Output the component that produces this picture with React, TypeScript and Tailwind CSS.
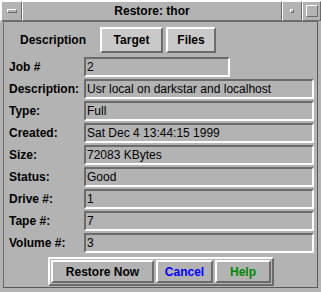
const rows = [
  { label: "Job #", value: "2", short: true },
  { label: "Description:", value: "Usr local on darkstar and localhost" },
  { label: "Type:", value: "Full" },
  { label: "Created:", value: "Sat Dec 4 13:44:15 1999" },
  { label: "Size:", value: "72083 KBytes" },
  { label: "Status:", value: "Good" },
  { label: "Drive #:", value: "1" },
  { label: "Tape #:", value: "7" },
  { label: "Volume #:", value: "3" },
];

const raised =
  "border-t-white border-l-white border-b-[#6b6b6b] border-r-[#6b6b6b]";
const sunken =
  "border-t-[#6b6b6b] border-l-[#6b6b6b] border-b-white border-r-white";

function TitleButton({ children, w }: { children: React.ReactNode; w: string }) {
  return (
    <div className={`${w} h-[20px] border ${raised} bg-[#b3b3b3] flex items-center justify-center`}>
      {children}
    </div>
  );
}

export default function App() {
  return (
    <div
      className="w-[321px] h-[292px] bg-[#b3b3b3] flex flex-col text-black"
      style={{ fontFamily: '"Liberation Sans", Arial, sans-serif' }}
    >
      {/* window title bar */}
      <div className="flex h-[21px] border-t border-l border-white bg-[#b3b3b3]">
        <TitleButton w="w-[21px]">
          <div className={`w-[10px] h-[4px] border ${raised}`} />
        </TitleButton>
        <div className={`flex-1 h-[20px] border ${raised} flex items-center justify-center text-[12px] font-bold`}>
          Restore: thor
        </div>
        <TitleButton w="w-[20px]">
          <div className={`w-[4px] h-[4px] border ${raised}`} />
        </TitleButton>
        <TitleButton w="w-[19px]">
          <div className={`w-[12px] h-[12px] border ${raised}`} />
        </TitleButton>
      </div>

      {/* dialog body */}
      <div className="flex-1 mx-[3px] mb-[4px] border-l border-t border-[#6b6b6b] border-r border-r-[#5a5a5a] border-b border-b-[#5a5a5a] flex flex-col">
        {/* tabs */}
        <div className="flex items-center h-[27px] mt-[4px] pl-[16px]">
          <span className="text-[12px] font-bold w-[80px]">Description</span>
          <button className={`w-[63px] h-[26px] border-2 ${raised} bg-[#c9c9c9] text-[12px] font-bold`}>
            Target
          </button>
          <button className={`ml-[3px] w-[50px] h-[26px] border-2 ${raised} bg-[#c9c9c9] text-[12px] font-bold`}>
            Files
          </button>
        </div>

        {/* fields */}
        <div className="flex flex-col gap-[2px] mt-[4px]">
          {rows.map((r) => (
            <div key={r.label} className="flex items-center h-[20px]">
              <span className="w-[80px] pl-[5px] text-[12px] font-bold">{r.label}</span>
              <div
                className={`${r.short ? "w-[146px]" : "w-[230px]"} h-[20px] border-2 ${sunken} text-[12px] leading-[16px] pl-[1px] whitespace-nowrap overflow-hidden`}
              >
                {r.value}
              </div>
            </div>
          ))}
        </div>

        {/* action buttons */}
        <div className="flex justify-start pl-[44px] mt-[4px]">
          <div className={`flex gap-[2px] p-[1px] border-2 ${raised}`}>
            <button className={`w-[103px] h-[23px] border-2 ${raised} text-[12px] font-bold`}>
              Restore Now
            </button>
            <button className={`w-[57px] h-[23px] border-2 ${raised} text-[12px] font-bold text-[#0000ff]`}>
              Cancel
            </button>
            <button className={`w-[56px] h-[23px] border-2 ${raised} text-[12px] font-bold text-[#008800]`}>
              Help
            </button>
          </div>
        </div>
      </div>
    </div>
  );
}
